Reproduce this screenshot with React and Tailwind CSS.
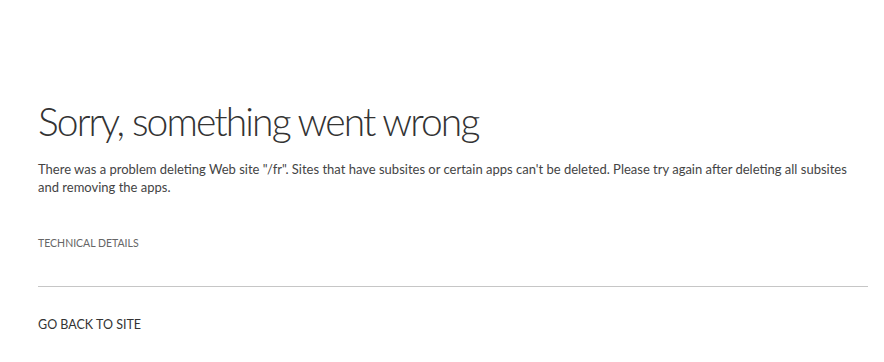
export default function App() {
    return (
        <div className="min-h-[362px] bg-white px-[38px] pt-[96px] font-['Segoe_UI','Lato',sans-serif]">
            <div className="w-[830px]">
                <h1 className="text-[39px] font-light leading-[50px] tracking-[-1.9px] text-[#333]">
                    Sorry, something went wrong
                </h1>
                <p className="mt-[14px] text-[13px] leading-[18px] text-[#444]">
                    There was a problem deleting Web site "/fr". Sites that have subsites or certain apps can't be deleted. Please try again after deleting all subsites and removing the apps.
                </p>
                <div className="mt-[40px] text-[10.5px] uppercase text-[#666]">Technical Details</div>
                <div className="mt-[34px] border-t border-[#c6c6c6]" />
                <a href="#" className="mt-[29px] block text-[12.5px] uppercase text-[#333]">
                    Go back to site
                </a>
            </div>
        </div>
    );
}
